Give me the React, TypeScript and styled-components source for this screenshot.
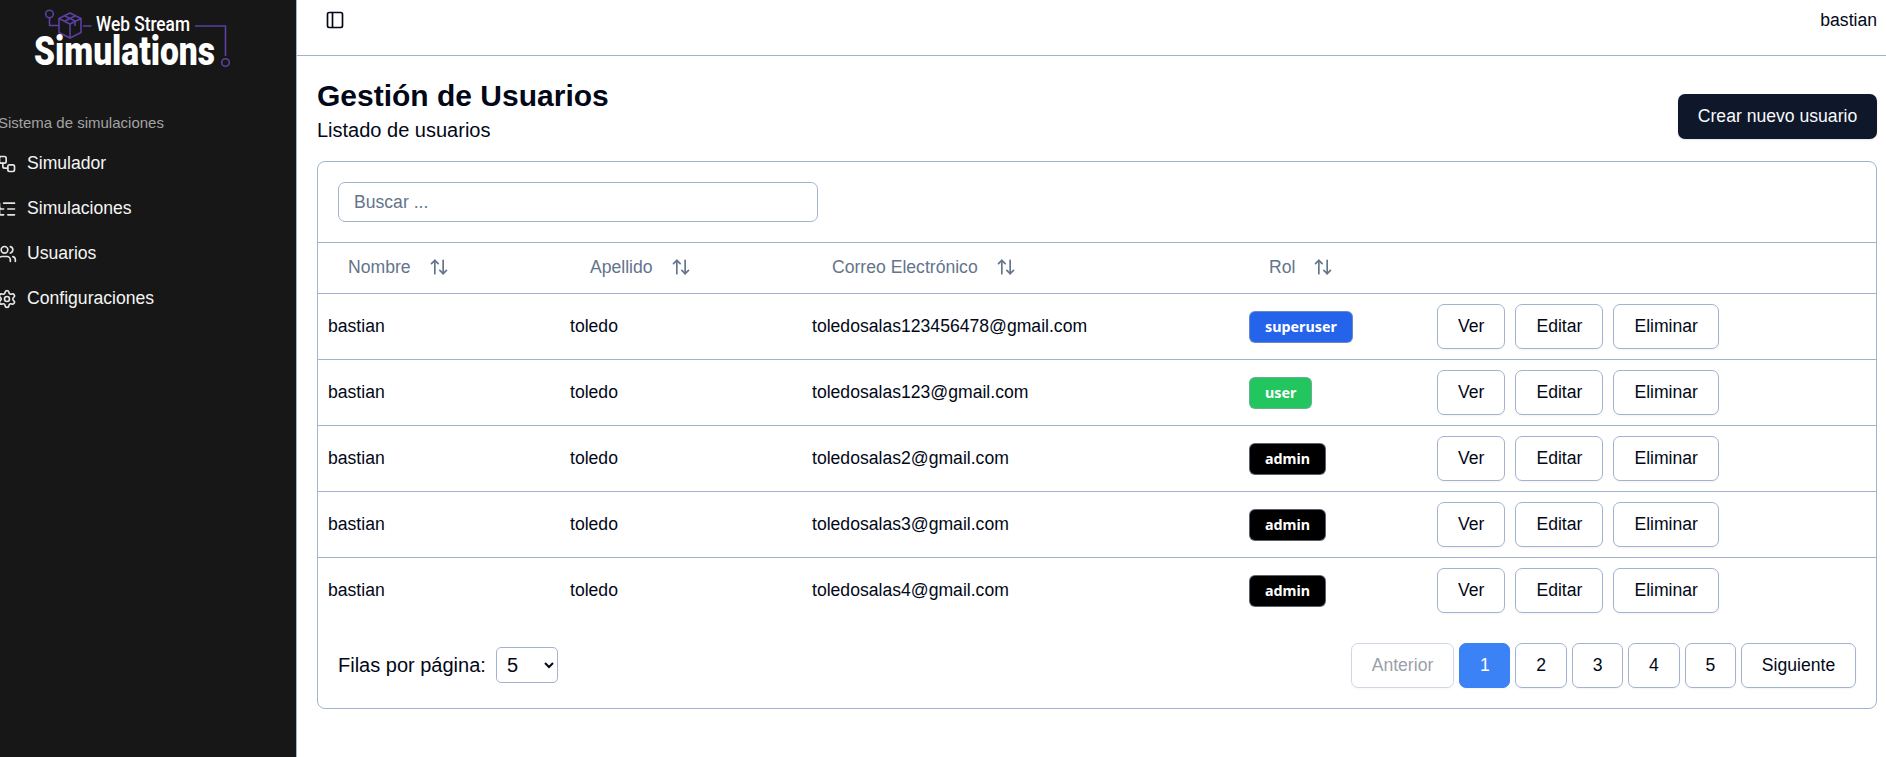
import React, { FC } from 'react';
import styled, { createGlobalStyle } from 'styled-components';
import { ArrowUpDown, ListTree, PanelLeft, Settings, Users, Workflow } from 'lucide-react';

const Global = createGlobalStyle`
  html, body { margin: 0; padding: 0; background: #fff; }
  body { font-family: 'Liberation Sans', Arial, sans-serif; font-size: 17.6px; color: #020817; }
  * { box-sizing: border-box; }
`;

const Shell = styled.div`
  display: flex;
  height: 757px;
  overflow: hidden;
`;

const Sidebar = styled.aside`
  width: 297px;
  flex: none;
  background: #171717;
  border-right: 1px solid #a3b3cf;
  overflow: hidden;
`;

const LogoBox = styled.div`
  height: 110px;
`;

const GroupLabel = styled.div`
  margin-left: -2px;
  height: 26px;
  line-height: 26px;
  font-size: 15px;
  color: #a3a3a3;
`;

const Nav = styled.nav`
  display: flex;
  flex-direction: column;
  margin: 5px 0 0 -3px;
`;

const NavItem = styled.div`
  display: flex;
  align-items: center;
  gap: 10px;
  height: 45px;
  font-size: 17.6px;
  color: #f5f5f5;
  svg { flex: none; color: #e5e5e5; }
`;

const Main = styled.main`
  flex: 1;
  min-width: 0;
`;

const TopBar = styled.header`
  display: flex;
  justify-content: space-between;
  height: 56px;
  padding: 10px 9px 0 28px;
  border-bottom: 1px solid #a3b3cf;
  line-height: 20px;
`;

const Content = styled.div`
  padding: 22px 9px 0 20px;
`;

const TitleRow = styled.div`
  display: flex;
  justify-content: space-between;
  height: 61px;
  margin-bottom: 22px;
`;

const Title = styled.h1`
  margin: 1px 0 0;
  font-size: 30px;
  line-height: 34px;
  font-weight: 700;
`;

const Subtitle = styled.p`
  margin: 5px 0 0;
  font-size: 20px;
  line-height: 24px;
`;

const PrimaryButton = styled.button`
  align-self: flex-end;
  width: 199px;
  height: 45px;
  border: none;
  border-radius: 7px;
  background: #0f172a;
  color: #f8fafc;
  font: 17.6px 'Liberation Sans', Arial, sans-serif;
  box-shadow: 0 1px 2px rgba(0, 0, 0, 0.1);
`;

const Card = styled.section`
  height: 548px;
  border: 1px solid #a3b3cf;
  border-radius: 8px;
`;

const SearchRow = styled.div`
  height: 80px;
  padding: 20px 20px 0;
`;

const SearchInput = styled.input`
  display: block;
  width: 480px;
  height: 40px;
  padding: 0 15px;
  border: 1px solid #a3b3cf;
  border-radius: 7px;
  font: 17.6px 'Liberation Sans', Arial, sans-serif;
  &::placeholder { color: #64748b; opacity: 1; }
`;

const Table = styled.table`
  width: 100%;
  table-layout: fixed;
  border-collapse: collapse;
`;

const Col = styled.col<{ $width?: number }>`
  width: ${({ $width }) => ($width ? `${$width}px` : 'auto')};
`;

const HeadRow = styled.tr`
  height: 51px;
  border-top: 1px solid #a3b3cf;
`;

const HeadCell = styled.th`
  padding: 0 0 2px 30px;
  text-align: left;
  font-weight: 400;
  color: #64748b;
`;

const HeadInner = styled.span`
  display: inline-flex;
  align-items: center;
  gap: 18px;
`;

const Row = styled.tr`
  height: 66px;
  border-top: 1px solid #a3b3cf;
`;

const Cell = styled.td`
  padding: 0 0 0 10px;
`;

const Badge = styled.span<{ $bg: string }>`
  display: inline-flex;
  align-items: center;
  height: 32px;
  padding: 0 15px;
  border: 1px solid rgba(148, 163, 184, 0.6);
  border-radius: 6px;
  background: ${({ $bg }) => $bg};
  color: #fff;
  font: 700 14.3px 'Noto Sans', sans-serif;
`;

const Actions = styled.div`
  display: flex;
  gap: 10px;
`;

const OutlineButton = styled.button<{ $active?: boolean }>`
  height: 45px;
  padding: 0 20px;
  border: 1px solid ${({ $active }) => ($active ? '#3b82f6' : '#a3b3cf')};
  border-radius: 7px;
  background: ${({ $active }) => ($active ? '#3b82f6' : '#fff')};
  color: ${({ $active }) => ($active ? '#fff' : '#020817')};
  font: 17.6px 'Liberation Sans', Arial, sans-serif;
  box-shadow: 0 1px 2px rgba(0, 0, 0, 0.05);
  &:disabled { opacity: 0.5; color: #374151; }
`;

const PagerButton = styled(OutlineButton)`
  padding: 0 19.8px;
`;

const Footer = styled.div`
  display: flex;
  justify-content: space-between;
  align-items: center;
  padding: 19px 20px 0;
`;

const RowsPicker = styled.label`
  display: flex;
  align-items: center;
  gap: 10px;
  font-size: 20px;
`;

const RowsSelect = styled.select`
  width: 62px;
  height: 36px;
  padding-left: 6px;
  border: 1px solid #a3b3cf;
  border-radius: 5px;
  background: #fff;
  color: #020817;
  font: 20px 'Liberation Sans', Arial, sans-serif;
`;

const Pager = styled.div`
  display: flex;
  gap: 5px;
`;

const LogoMark: FC = () => (
  <svg width="296" height="72" viewBox="0 0 296 72" fill="none">
    <g stroke="#5b3fa3" strokeWidth="1.6">
      <circle cx="49.5" cy="14" r="3.8" />
      <path d="M49.5 18v7.5H59" />
      <path d="M70 13l11 5.5v14L70 38l-11-5.5v-14zM59 18.5L70 24l11-5.5M70 24v14M64 15.5l11 5.5v5M76 15.5l-11 5.5" />
      <path d="M83 26h8.5M195 26h30.5v30" />
      <circle cx="225.5" cy="62.5" r="3.8" />
    </g>
    <text x="96" y="31" textLength="94" lengthAdjust="spacingAndGlyphs" fill="#fff" fontFamily="Roboto, sans-serif" fontWeight="500" fontSize="20">Web Stream</text>
    <text x="34" y="65" textLength="181" lengthAdjust="spacingAndGlyphs" fill="#fff" fontFamily="Roboto, sans-serif" fontWeight="900" fontSize="40">Simulations</text>
  </svg>
);

const users = [
  { email: 'toledosalas123456478@gmail.com', role: 'superuser', color: '#2563eb' },
  { email: 'toledosalas123@gmail.com', role: 'user', color: '#22c55e' },
  { email: 'toledosalas2@gmail.com', role: 'admin', color: '#000' },
  { email: 'toledosalas3@gmail.com', role: 'admin', color: '#000' },
  { email: 'toledosalas4@gmail.com', role: 'admin', color: '#000' },
];

const headers = ['Nombre', 'Apellido', 'Correo Electrónico', 'Rol'];

export default function App() {
  return (
    <Shell>
      <Global />
      <Sidebar>
        <LogoBox><LogoMark /></LogoBox>
        <GroupLabel>Sistema de simulaciones</GroupLabel>
        <Nav>
          <NavItem><Workflow size={20} />Simulador</NavItem>
          <NavItem><ListTree size={20} />Simulaciones</NavItem>
          <NavItem><Users size={20} />Usuarios</NavItem>
          <NavItem><Settings size={20} />Configuraciones</NavItem>
        </Nav>
      </Sidebar>
      <Main>
        <TopBar>
          <PanelLeft size={20} />
          <span>bastian</span>
        </TopBar>
        <Content>
          <TitleRow>
            <div>
              <Title>Gestión de Usuarios</Title>
              <Subtitle>Listado de usuarios</Subtitle>
            </div>
            <PrimaryButton>Crear nuevo usuario</PrimaryButton>
          </TitleRow>
          <Card>
            <SearchRow>
              <SearchInput placeholder="Buscar ..." />
            </SearchRow>
            <Table>
              <colgroup>
                <Col $width={242} />
                <Col $width={242} />
                <Col $width={437} />
                <Col $width={188} />
                <Col />
              </colgroup>
              <thead>
                <HeadRow>
                  {headers.map((h) => (
                    <HeadCell key={h}>
                      <HeadInner>{h}<ArrowUpDown size={20} /></HeadInner>
                    </HeadCell>
                  ))}
                  <HeadCell />
                </HeadRow>
              </thead>
              <tbody>
                {users.map((u) => (
                  <Row key={u.email}>
                    <Cell>bastian</Cell>
                    <Cell>toledo</Cell>
                    <Cell>{u.email}</Cell>
                    <Cell><Badge $bg={u.color}>{u.role}</Badge></Cell>
                    <Cell>
                      <Actions>
                        <OutlineButton>Ver</OutlineButton>
                        <OutlineButton>Editar</OutlineButton>
                        <OutlineButton>Eliminar</OutlineButton>
                      </Actions>
                    </Cell>
                  </Row>
                ))}
              </tbody>
            </Table>
            <Footer>
              <RowsPicker>
                Filas por página:
                <RowsSelect defaultValue="5">
                  <option value="5">5</option>
                  <option value="10">10</option>
                </RowsSelect>
              </RowsPicker>
              <Pager>
                <PagerButton disabled>Anterior</PagerButton>
                <PagerButton $active>1</PagerButton>
                <PagerButton>2</PagerButton>
                <PagerButton>3</PagerButton>
                <PagerButton>4</PagerButton>
                <PagerButton>5</PagerButton>
                <PagerButton>Siguiente</PagerButton>
              </Pager>
            </Footer>
          </Card>
        </Content>
      </Main>
    </Shell>
  );
}
